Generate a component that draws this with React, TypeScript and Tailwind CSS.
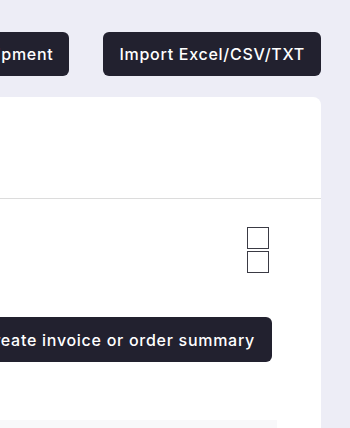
import React from 'react';

const btn =
  "h-[44px] shrink-0 rounded-[6px] bg-[#22212f] px-[16px] text-[16px] font-medium tracking-[0.045em] text-white whitespace-nowrap";

export default function App() {
  return (
    <div
      className="h-[428px] w-[350px] overflow-hidden bg-[#ededf6]"
      style={{ fontFamily: 'Inter, "Noto Sans", sans-serif' }}
    >
      <div className="flex flex-col items-end pr-[29px] pt-[32px]">
        <div className="flex justify-end gap-[34px]">
          <button className={btn}>New Shipment</button>
          <button className={btn}>Import Excel/CSV/TXT</button>
        </div>

        <div className="mt-[21px] flex w-full justify-end">
          <div className="w-[700px] shrink-0 rounded-t-[8px] bg-white">
            <div className="h-[102px] border-b border-[#dcdcdc]" />
            <div className="flex justify-end pr-[52px] pt-[28px]">
              <div className="flex flex-col gap-[2px]">
                <span className="h-[22px] w-[22px] border-[1.5px] border-[#3a3a44]" />
                <span className="h-[22px] w-[22px] border-[1.5px] border-[#3a3a44]" />
              </div>
            </div>
            <div className="flex justify-end pr-[49px] pt-[44px]">
              <button className={btn + " h-[45px] px-[17px]"}>Create invoice or order summary</button>
            </div>
            <div className="mt-[58px] mr-[44px] h-[10px] bg-[#f8f8fa]" />
          </div>
        </div>
      </div>
    </div>
  );
}
